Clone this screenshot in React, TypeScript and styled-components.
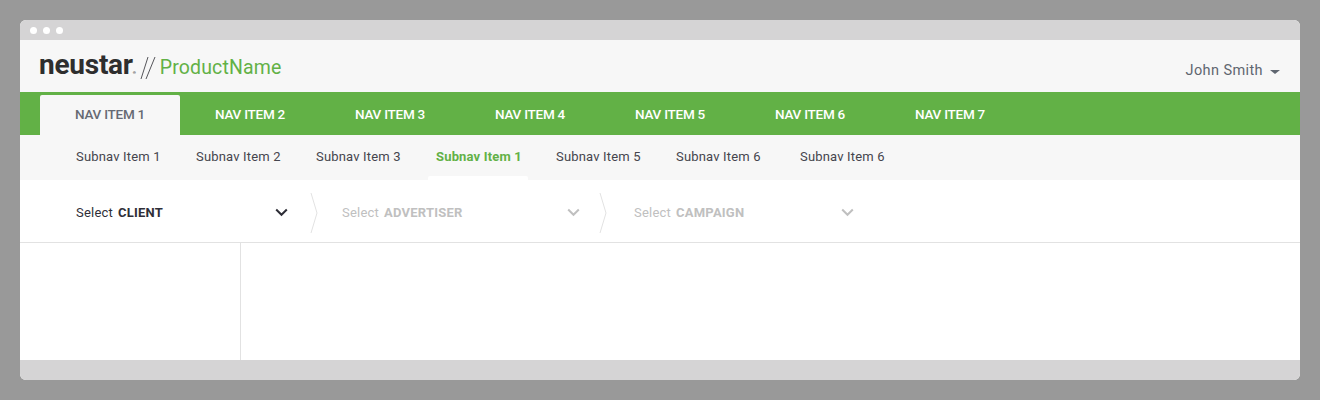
import { Fragment } from 'react';
import styled, { createGlobalStyle } from 'styled-components';

const navItems = ['NAV ITEM 1', 'NAV ITEM 2', 'NAV ITEM 3', 'NAV ITEM 4', 'NAV ITEM 5', 'NAV ITEM 6', 'NAV ITEM 7'];

const subItems = [
    { id: 1, label: 'Subnav Item 1', active: false, width: 120 },
    { id: 2, label: 'Subnav Item 2', active: false, width: 120 },
    { id: 3, label: 'Subnav Item 3', active: false, width: 120 },
    { id: 4, label: 'Subnav Item 1', active: true, width: 120 },
    { id: 5, label: 'Subnav Item 5', active: false, width: 120 },
    { id: 6, label: 'Subnav Item 6', active: false, width: 124 },
    { id: 7, label: 'Subnav Item 6', active: false, width: 120 },
];

const selectors = [
    { id: 1, name: 'CLIENT', width: 290, inset: 56, end: 22, muted: false },
    { id: 2, name: 'ADVERTISER', width: 280, inset: 23, end: 19, muted: true },
    { id: 3, name: 'CAMPAIGN', width: 247, inset: 26, end: 1, muted: true },
];

const GlobalStyle = createGlobalStyle`
    html, body {
        margin: 0;
        padding: 0;
        background: #999999;
    }
    body {
        font-family: Roboto, "Liberation Sans", sans-serif;
    }
`;

const Page = styled.div`
    box-sizing: border-box;
    height: 400px;
    padding: 20px;
`;

const Browser = styled.div`
    display: flex;
    flex-direction: column;
    height: 360px;
    border-radius: 6px;
    overflow: hidden;
    background: #ffffff;
`;

const TitleBar = styled.div`
    display: flex;
    align-items: center;
    gap: 6px;
    height: 20px;
    padding-left: 10px;
    background: #d5d4d5;
`;

const Dot = styled.span`
    width: 7px;
    height: 7px;
    border-radius: 50%;
    background: #ffffff;
`;

const Header = styled.header`
    display: flex;
    align-items: center;
    justify-content: space-between;
    height: 52px;
    padding: 0 19px;
    background: #f7f7f7;
`;

const Brand = styled.div`
    display: flex;
    align-items: center;
`;

const Logo = styled.span`
    font-size: 28px;
    line-height: 28px;
    font-weight: 700;
    letter-spacing: -0.25px;
    color: #2e2e2e;
    margin-top: -2px;
`;

const LogoMark = styled.sup`
    font-size: 4px;
    line-height: 4px;
    vertical-align: baseline;
`;

const Slashes = styled.svg`
    width: 16px;
    height: 24px;
    margin: 4px 4px 0 4px;
`;

const ProductName = styled.span`
    font-size: 19.5px;
    letter-spacing: 0.15px;
    color: #62b146;
    margin-top: 3px;
`;

const User = styled.div`
    display: flex;
    align-items: center;
    gap: 7px;
    margin: 8px 1px 0 0;
    font-size: 14.5px;
    letter-spacing: 0.4px;
    color: #5f6670;
`;

const Caret = styled.span`
    width: 0;
    height: 0;
    margin-top: 3px;
    border-left: 5px solid transparent;
    border-right: 5px solid transparent;
    border-top: 4px solid #5f6670;
`;

const Nav = styled.nav`
    display: flex;
    align-items: flex-end;
    height: 43px;
    padding-left: 20px;
    background: #62b146;
`;

const NavItem = styled.a<{ $active?: boolean }>`
    display: flex;
    align-items: center;
    justify-content: center;
    box-sizing: border-box;
    width: 140px;
    height: 40px;
    padding-bottom: 2px;
    border-radius: 2px 2px 0 0;
    font-size: 13.5px;
    font-weight: 500;
    letter-spacing: -0.25px;
    color: ${(p) => (p.$active ? '#666a73' : '#ffffff')};
    background: ${(p) => (p.$active ? '#f7f7f7' : 'transparent')};
`;

const SubNav = styled.div`
    display: flex;
    height: 45px;
    padding-left: 48px;
    background: #f7f7f7;
`;

const SubItem = styled.div<{ $width: number }>`
    width: ${(p) => p.$width}px;
`;

const SubLink = styled.a<{ $active?: boolean }>`
    display: block;
    box-sizing: border-box;
    width: 100px;
    height: 45px;
    padding: 12px 0 0 8px;
    font-size: 13px;
    line-height: 20px;
    letter-spacing: 0.17px;
    white-space: nowrap;
    font-weight: ${(p) => (p.$active ? 700 : 400)};
    color: ${(p) => (p.$active ? '#62b146' : '#45454d')};
    position: relative;
    &::after {
        content: ${(p) => (p.$active ? "''" : 'none')};
        position: absolute;
        left: 0;
        right: 0;
        bottom: 0;
        height: 4px;
        border-radius: 2px 2px 0 0;
        background: #ffffff;
    }
`;

const Selectors = styled.div`
    display: flex;
    height: 62px;
    border-bottom: 1px solid #e2e2e2;
    background: #ffffff;
`;

const Selector = styled.div<{ $width: number; $inset: number; $end: number; $muted?: boolean }>`
    display: flex;
    align-items: center;
    justify-content: space-between;
    box-sizing: border-box;
    width: ${(p) => p.$width}px;
    padding: 3px ${(p) => p.$end}px 0 ${(p) => p.$inset}px;
    font-size: 13px;
    letter-spacing: 0.22px;
    color: ${(p) => (p.$muted ? '#c0c0c0' : '#2f2f38')};
`;

const SelectorText = styled.span`
    display: flex;
    gap: 5px;
`;

const SelectorName = styled.strong`
    font-weight: 700;
`;

const Chevron = styled.svg`
    width: 13px;
    height: 9px;
`;

const Divider = styled.svg`
    width: 9px;
    height: 42px;
    margin-top: 12px;
    flex-shrink: 0;
`;

const Body = styled.div`
    display: flex;
    flex: 1;
    background: #ffffff;
`;

const Sidebar = styled.aside`
    width: 220px;
    border-right: 1px solid #e2e2e2;
`;

const Footer = styled.div`
    height: 20px;
    background: #d5d4d5;
`;

function SelectorChevron({ color }: { color: string }) {
    return (
        <Chevron viewBox="0 0 13 9">
            <path d="M1.2 1.5 L6.5 6.8 L11.8 1.5" fill="none" stroke={color} strokeWidth="2" />
        </Chevron>
    );
}

function SelectorDivider() {
    return (
        <Divider viewBox="0 0 9 42">
            <path d="M1 1 L7 21 L1 41" fill="none" stroke="#e2e2e2" strokeWidth="1" />
        </Divider>
    );
}

export default function App() {
    return (
        <Page>
            <GlobalStyle />
            <Browser>
                <TitleBar>
                    <Dot />
                    <Dot />
                    <Dot />
                </TitleBar>
                <Header>
                    <Brand>
                        <Logo>
                            neustar<LogoMark>®</LogoMark>
                        </Logo>
                        <Slashes viewBox="0 0 16 24">
                            <path d="M8 1 L1 23 M15 1 L6 23" fill="none" stroke="#55555a" strokeWidth="1" />
                        </Slashes>
                        <ProductName>ProductName</ProductName>
                    </Brand>
                    <User>
                        John Smith
                        <Caret />
                    </User>
                </Header>
                <Nav>
                    {navItems.map((item, i) => (
                        <NavItem key={item} $active={i === 0}>
                            {item}
                        </NavItem>
                    ))}
                </Nav>
                <SubNav>
                    {subItems.map((item) => (
                        <SubItem key={item.id} $width={item.width}>
                            <SubLink $active={item.active}>{item.label}</SubLink>
                        </SubItem>
                    ))}
                </SubNav>
                <Selectors>
                    {selectors.map((s, i) => (
                        <Fragment key={s.id}>
                            {i > 0 && <SelectorDivider />}
                            <Selector $width={s.width} $inset={s.inset} $end={s.end} $muted={s.muted}>
                                <SelectorText>
                                    Select <SelectorName>{s.name}</SelectorName>
                                </SelectorText>
                                <SelectorChevron color={s.muted ? '#c0c0c0' : '#2f2f38'} />
                            </Selector>
                        </Fragment>
                    ))}
                </Selectors>
                <Body>
                    <Sidebar />
                </Body>
                <Footer />
            </Browser>
        </Page>
    );
}
